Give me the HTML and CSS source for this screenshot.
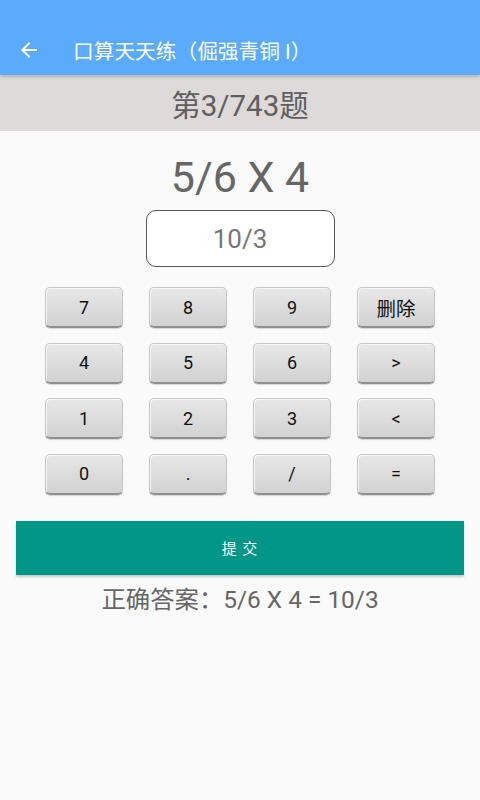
FILE: index.html
```html
<!DOCTYPE html>
<html lang="zh">
<head>
<meta charset="utf-8">
<link rel="stylesheet" href="styles.css">
</head>
<body>
<div class="app">
  <header class="appbar">
    <div class="bar-row">
      <svg class="back" width="24" height="24" viewBox="0 0 24 24"><path d="M20 11H7.83l5.59-5.59L12 4l-8 8 8 8 1.41-1.41L7.83 13H20v-2z" fill="#fff"/></svg>
      <span class="title">口算天天练（倔强青铜 I）</span>
    </div>
  </header>
  <div class="banner">第3/743题</div>
  <main class="main">
    <div class="expr">5/6 X 4</div>
    <div class="input">10/3</div>
    <div class="keypad">
      <div class="key">7</div><div class="key">8</div><div class="key">9</div><div class="key cjk">删除</div>
      <div class="key">4</div><div class="key">5</div><div class="key">6</div><div class="key">&gt;</div>
      <div class="key">1</div><div class="key">2</div><div class="key">3</div><div class="key">&lt;</div>
      <div class="key">0</div><div class="key">.</div><div class="key">/</div><div class="key">=</div>
    </div>
    <div class="submit">提 交</div>
    <div class="answer">正确答案：5/6 X 4 = 10/3</div>
  </main>
</div>
</body>
</html>
```

FILE: styles.css
```css
* { box-sizing: border-box; }
html, body { margin: 0; padding: 0; }
body {
  font-family: Roboto, "Noto Sans CJK SC", sans-serif;
  background: #fafafa;
}
.app { width: 480px; height: 800px; background: #fafafa; display: flex; flex-direction: column; }
.appbar {
  height: 75px;
  background: #5aabfc;
  padding-top: 24px;
  box-shadow: 0 2px 3px rgba(0,0,0,0.18);
  position: relative;
  z-index: 1;
}
.bar-row { height: 51px; display: flex; align-items: center; }
.back { margin-left: 17px; }
.title { color: #fff; font-size: 20.7px; margin-left: 32px; }
.banner {
  height: 56px;
  background: #dddad9;
  color: #5f5f5f;
  font-size: 29.5px;
  display: flex; align-items: center; justify-content: center;
}
.main { display: flex; flex-direction: column; align-items: center; }
.expr {
  margin-top: 23px;
  height: 46px; line-height: 46px;
  font-size: 43px;
  color: #666;
}
.input {
  margin-top: 10px;
  width: 189px; height: 57px;
  border: 1.5px solid #555;
  border-radius: 10px;
  background: #fff;
  color: #777;
  font-size: 26px;
  display: flex; align-items: center; justify-content: center;
}
.keypad {
  margin-top: 20px;
  display: grid;
  grid-template-columns: repeat(4, 78px);
  grid-auto-rows: 41px;
  column-gap: 26px;
  row-gap: 14.5px;
}
.key {
  border-radius: 5px;
  background: linear-gradient(180deg, #e8e8e8 0%, #dcdcdc 50%, #d2d2d2 100%);
  border: 1px solid #c6c6c6;
  border-bottom: 2px solid #8f8f8f;
  box-shadow: inset 1px 1px 0 #f6f6f6, 0 1px 1px rgba(0,0,0,0.15);
  color: #111;
  font-size: 18px;
  display: flex; align-items: center; justify-content: center;
}
.key.cjk { font-size: 19.5px; }
.submit {
  margin-top: 26px;
  width: 448px; height: 54px;
  background: #009688;
  color: #fff;
  font-size: 15px;
  letter-spacing: 1px;
  display: flex; align-items: center; justify-content: center;
  box-shadow: 0 2px 2px rgba(0,0,0,0.2);
}
.answer {
  margin-top: 10px;
  height: 30px; line-height: 30px;
  font-size: 24.4px;
  color: #666;
}
```
